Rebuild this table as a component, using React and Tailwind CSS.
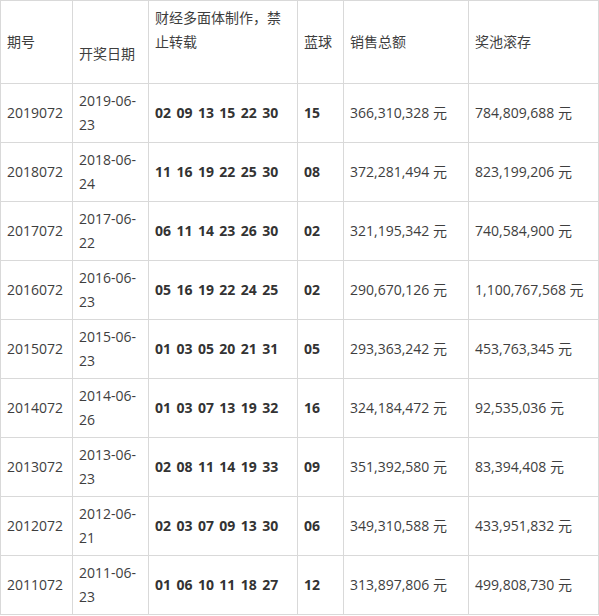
const rows = [
  ["2019072", "2019-06-", "23", "02 09 13 15 22 30", "15", "366,310,328", "784,809,688"],
  ["2018072", "2018-06-", "24", "11 16 19 22 25 30", "08", "372,281,494", "823,199,206"],
  ["2017072", "2017-06-", "22", "06 11 14 23 26 30", "02", "321,195,342", "740,584,900"],
  ["2016072", "2016-06-", "23", "05 16 19 22 24 25", "02", "290,670,126", "1,100,767,568"],
  ["2015072", "2015-06-", "23", "01 03 05 20 21 31", "05", "293,363,242", "453,763,345"],
  ["2014072", "2014-06-", "26", "01 03 07 13 19 32", "16", "324,184,472", "92,535,036"],
  ["2013072", "2013-06-", "23", "02 08 11 14 19 33", "09", "351,392,580", "83,394,408"],
  ["2012072", "2012-06-", "21", "02 03 07 09 13 30", "06", "349,310,588", "433,951,832"],
  ["2011072", "2011-06-", "23", "01 06 10 11 18 27", "12", "313,897,806", "499,808,730"],
];

const cell = "border border-[#d9d9d9] px-[6px] py-[5px] align-middle";

export default function App() {
  return (
    <div className="bg-white w-[599px] h-[616px] text-[#3e3e3e] text-[14px] leading-[24px] font-['Open_Sans','Noto_Sans_CJK_SC',sans-serif]">
      <table className="border-collapse table-fixed w-[598px]">
        <colgroup>
          <col className="w-[72px]" />
          <col className="w-[76px]" />
          <col className="w-[149px]" />
          <col className="w-[46px]" />
          <col className="w-[125px]" />
          <col className="w-[130px]" />
        </colgroup>
        <thead>
          <tr>
            <th className={`${cell} font-normal text-left`}>期号</th>
            <th className={`${cell} font-normal text-left`}>
              <br />
              开奖日期
            </th>
            <th className={`${cell} font-normal text-left !align-top`}>
              财经多面体制作，禁
              <br />
              止转载
              <br />
              &nbsp;
            </th>
            <th className={`${cell} font-normal text-left`}>蓝球</th>
            <th className={`${cell} font-normal text-left`}>销售总额</th>
            <th className={`${cell} font-normal text-left`}>奖池滚存</th>
          </tr>
        </thead>
        <tbody>
          {rows.map((r) => (
            <tr key={r[0]}>
              <td className={cell}>{r[0]}</td>
              <td className={cell}>
                {r[1]}
                <br />
                {r[2]}
              </td>
              <td className={`${cell} font-bold text-[#333] [word-spacing:1.8px] whitespace-nowrap`}>{r[3]}</td>
              <td className={`${cell} font-bold text-[#333]`}>{r[4]}</td>
              <td className={`${cell} whitespace-nowrap`}>{r[5]} 元</td>
              <td className={`${cell} whitespace-nowrap`}>{r[6]} 元</td>
            </tr>
          ))}
        </tbody>
      </table>
    </div>
  );
}
